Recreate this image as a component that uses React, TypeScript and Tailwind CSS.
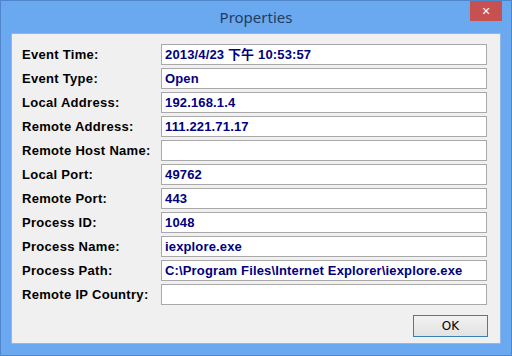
import React from "react";

const rows: [string, string][] = [
  ["Event Time:", "2013/4/23 下午 10:53:57"],
  ["Event Type:", "Open"],
  ["Local Address:", "192.168.1.4"],
  ["Remote Address:", "111.221.71.17"],
  ["Remote Host Name:", ""],
  ["Local Port:", "49762"],
  ["Remote Port:", "443"],
  ["Process ID:", "1048"],
  ["Process Name:", "iexplore.exe"],
  ["Process Path:", "C:\\Program Files\\Internet Explorer\\iexplore.exe"],
  ["Remote IP Country:", ""],
];

export default function App() {
  return (
    <div className="w-[512px] h-[356px] bg-[#6aa8f0] border border-[#4f86c9] flex flex-col">
      <div className="h-[32px] grid grid-cols-[1fr_auto_1fr] items-start">
        <div />
        <div
          className="pt-[6px] text-[15px] leading-[21px] text-[#1f3d60]"
          style={{ fontFamily: '"Noto Sans", "Open Sans", sans-serif' }}
        >
          Properties
        </div>
        <div className="flex justify-end pr-[9px]">
          <div
            className="w-[32px] h-[20px] bg-[#c75050] text-white flex items-center justify-center text-[11px] font-bold leading-none"
            style={{ fontFamily: '"DejaVu Sans", sans-serif' }}
          >
            ✕
          </div>
        </div>
      </div>
      <div
        className="mx-[10px] h-[311px] bg-[#f0f0f0] border border-[#8fb8e8] flex flex-col pt-[10px] pl-[10px] pr-[12px]"
        style={{ fontFamily: '"Liberation Sans", Arial, "Noto Sans CJK TC", sans-serif' }}
      >
        <div className="flex flex-col gap-[3px]">
          {rows.map(([label, value]) => (
            <div key={label} className="flex items-center h-[21px]">
              <div className="w-[139px] text-[13px] font-bold text-black tracking-[0.3px] leading-none">
                {label}
              </div>
              <div className="w-[326px] h-[21px] bg-white border border-[#a9a9a9] flex items-center pl-[3px] text-[13px] font-bold text-[#000080] tracking-[0.15px] leading-none whitespace-nowrap overflow-hidden">
                {value}
              </div>
            </div>
          ))}
        </div>
        <div className="flex justify-end mt-[10px]">
          <div
            className="w-[75px] h-[22px] border border-[#3c7fb1] bg-gradient-to-b from-[#f2f2f2] to-[#e2e2e2] flex items-center justify-center text-[12px] text-black"
            style={{ fontFamily: '"DejaVu Sans", sans-serif' }}
          >
            OK
          </div>
        </div>
      </div>
    </div>
  );
}
